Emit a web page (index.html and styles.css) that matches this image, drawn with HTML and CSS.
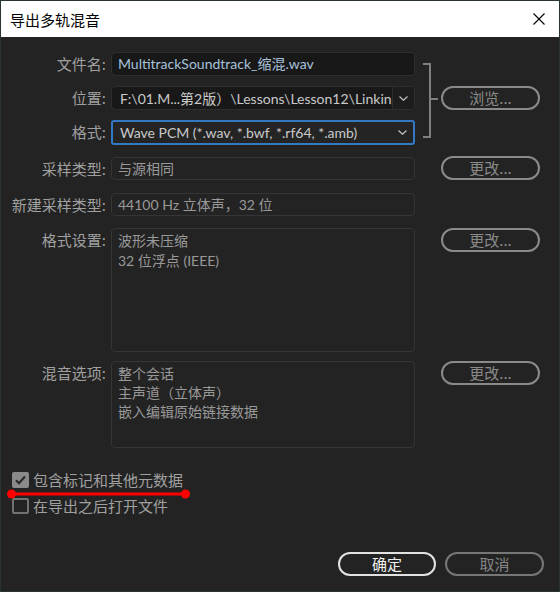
FILE: index.html
```html
<!DOCTYPE html>
<html lang="zh-CN">
<head>
    <meta charset="UTF-8">
    <title>导出多轨混音</title>
    <link rel="stylesheet" href="styles.css">
</head>
<body>
    <div class="dialog">
        <!-- 标题栏 -->
        <div class="titlebar">
            <span class="title">导出多轨混音</span>
            <svg class="close" width="12" height="12" viewBox="0 0 12 12">
                <path d="M0.5 0.5 L11.5 11.5 M11.5 0.5 L0.5 11.5" stroke="#000" stroke-width="1.1" fill="none"/>
            </svg>
        </div>

        <div class="content">
            <!-- 文件名 / 位置 / 格式 -->
            <div class="group">
                <div class="stack">
                    <div class="row">
                        <label class="label">文件名:</label>
                        <div class="field input filename">MultitrackSoundtrack_缩混.wav</div>
                    </div>
                    <div class="row">
                        <label class="label">位置:</label>
                        <div class="field select location">
                            <span class="select-text">F:\01.M...第2版）\Lessons\Lesson12\Linking Files</span>
                            <span class="arrow split">
                                <svg width="9" height="5" viewBox="0 0 9 5"><path d="M0.5 0.5 L4.5 4.3 L8.5 0.5" stroke="#bdbdbd" stroke-width="1.2" fill="none"/></svg>
                            </span>
                        </div>
                    </div>
                    <div class="row row-tall">
                        <label class="label">格式:</label>
                        <div class="field select format">
                            <span class="select-text">Wave PCM (*.wav, *.bwf, *.rf64, *.amb)</span>
                            <span class="arrow">
                                <svg width="9" height="5" viewBox="0 0 9 5"><path d="M0.5 0.5 L4.5 4.3 L8.5 0.5" stroke="#bdbdbd" stroke-width="1.2" fill="none"/></svg>
                            </span>
                        </div>
                    </div>
                </div>
                <div class="bracket">
                    <div class="bracket-line"></div>
                    <div class="bracket-tick"></div>
                </div>
                <button class="pill browse">浏览...</button>
            </div>

            <div class="row row-sample">
                <label class="label">采样类型:</label>
                <div class="field box">与源相同</div>
                <button class="pill side">更改...</button>
            </div>

            <div class="row row-new">
                <label class="label">新建采样类型:</label>
                <div class="field box punct">44100 Hz 立体声，32 位</div>
            </div>

            <div class="row row-settings">
                <label class="label">格式设置:</label>
                <div class="field box multi settings">
                    <div>波形未压缩</div>
                    <div>32 位浮点 (IEEE)</div>
                </div>
                <button class="pill side">更改...</button>
            </div>

            <div class="row row-mix">
                <label class="label">混音选项:</label>
                <div class="field box multi mix">
                    <div>整个会话</div>
                    <div>主声道（立体声）</div>
                    <div>嵌入编辑原始链接数据</div>
                </div>
                <button class="pill side">更改...</button>
            </div>

            <!-- 复选框 -->
            <div class="checks">
                <div class="check">
                    <span class="checkbox checked">
                        <svg width="17" height="16" viewBox="0 0 17 16"><path d="M4 8.2 L7 11.2 L13 4.6" stroke="#2a2a2a" stroke-width="2.2" fill="none"/></svg>
                    </span>
                    <span class="check-text">包含标记和其他元数据</span>
                </div>
                <div class="check second">
                    <span class="checkbox"></span>
                    <span class="check-text">在导出之后打开文件</span>
                </div>
                <svg class="mark" width="184" height="10" viewBox="0 0 184 10">
                    <line x1="4.5" y1="5" x2="178.5" y2="5" stroke="#ff0000" stroke-width="3"/>
                    <circle cx="4.5" cy="5" r="4.5" fill="#ff0000"/>
                    <circle cx="178.5" cy="5" r="4.5" fill="#ff0000"/>
                </svg>
            </div>
        </div>

        <!-- 底部按钮 -->
        <div class="footer">
            <button class="pill ok">确定</button>
            <button class="pill cancel">取消</button>
        </div>
    </div>
</body>
</html>
```

FILE: styles.css
```css
body, html {
    margin: 0;
    padding: 0;
    background-color: #232323;
}

.dialog {
    width: 560px;
    height: 592px;
    box-sizing: border-box;
    border: 1px solid #2b3434;
    background-color: #232323;
    display: flex;
    flex-direction: column;
    font-family: "Noto Sans CJK SC", "Noto Sans", sans-serif;
    font-size: 15px;
    color: #a0a0a0;
}

/* 标题栏 */
.titlebar {
    height: 36px;
    background-color: #ffffff;
    display: flex;
    align-items: center;
    justify-content: space-between;
    padding: 0 14px 0 9px;
    color: #000;
}

.title {
    font-size: 15px;
}

/* 内容 */
.content {
    padding-top: 15px;
}

.row {
    display: flex;
    align-items: flex-start;
}

.label {
    width: 105px;
    padding-right: 5px;
    text-align: right;
    line-height: 24px;
    flex-shrink: 0;
}

.field {
    width: 304px;
    box-sizing: border-box;
    border-radius: 4px;
    flex-shrink: 0;
    font-family: Lato, "Noto Sans CJK SC", sans-serif;
    font-size: 14px;
}

/* 全角逗号居中 */
.field.punct {
    font-family: Lato, "Noto Sans CJK TC", "Noto Sans CJK SC", sans-serif;
}

.group {
    display: flex;
    align-items: flex-start;
}

.stack {
    display: flex;
    flex-direction: column;
    gap: 10px;
}

.stack .row {
    height: 24px;
}

.stack .row-tall {
    height: 25px;
}

.input {
    height: 24px;
    line-height: 22px;
    padding-left: 6px;
    background-color: #181818;
    border: 1px solid #2e2e2e;
    color: #a7c1dc;
    white-space: nowrap;
}

.select {
    display: flex;
    align-items: center;
    height: 24px;
    color: #c9c9c9;
    overflow: hidden;
}

.select-text {
    flex: 1;
    padding-left: 8px;
    white-space: nowrap;
    overflow: hidden;
}

.arrow {
    width: 21px;
    height: 100%;
    display: flex;
    align-items: center;
    justify-content: center;
    flex-shrink: 0;
}

.location {
    background-color: #181818;
    border: 1px solid #2e2e2e;
}

.location .select-text {
    padding-left: 8px;
}

.arrow.split {
    border-left: 1px solid #2e2e2e;
    background-color: #1d1d1d;
}

.format {
    height: 25px;
    background-color: #242424;
    border: 2px solid #3278c2;
    border-radius: 3px;
}

.format .select-text {
    padding-left: 7px;
}

/* 括号 */
.bracket {
    width: 26px;
    height: 93px;
    flex-shrink: 0;
    position: relative;
}

.bracket-line {
    margin: 11px 0 0 8px;
    width: 6px;
    height: 71px;
    border: 2px solid #7f7f7f;
    border-left: none;
}

.bracket-tick {
    position: absolute;
    left: 15px;
    top: 46px;
    width: 8px;
    height: 2px;
    background-color: #7f7f7f;
}

/* 按钮 */
.pill {
    width: 99px;
    height: 24px;
    box-sizing: border-box;
    border: 2px solid #8a8a8a;
    border-radius: 12px;
    background: transparent;
    color: #8a8a8a;
    font-family: "Noto Sans CJK SC", "Noto Sans", sans-serif;
    font-size: 15px;
    line-height: 18px;
    padding: 0;
    flex-shrink: 0;
}

.browse {
    margin-top: 34px;
}

.side {
    margin-left: 26px;
}

.row-sample .side {
    margin-top: -1px;
}

.box {
    border: 1px solid #353535;
    padding-left: 6px;
    color: #999;
}

.row-sample, .row-new {
    height: 23px;
}

.row-sample .box, .row-new .box {
    height: 23px;
    line-height: 21px;
}

.row-sample {
    margin-top: 12px;
}

.row-new {
    margin-top: 13px;
}

.row-sample .label, .row-new .label {
    line-height: 23px;
}

.multi {
    padding-top: 2px;
    line-height: 20px;
}

.row-settings {
    margin-top: 12px;
}

.settings {
    height: 124px;
}

.row-mix {
    margin-top: 9px;
}

.mix {
    height: 87px;
    line-height: 19px;
    padding-top: 2px;
}

/* 复选框 */
.checks {
    position: relative;
    margin-top: 24px;
    padding-left: 11px;
}

.check {
    display: flex;
    align-items: center;
    height: 16px;
}

.check.second {
    margin-top: 10px;
}

.checkbox {
    width: 17px;
    height: 16px;
    box-sizing: border-box;
    border: 2px solid #727272;
    border-radius: 2px;
    margin-right: 4px;
    flex-shrink: 0;
}

.checkbox.checked {
    border: none;
    background-color: #8a8a8a;
}

.checkbox svg {
    display: block;
}

.check-text {
    color: #a0a0a0;
    line-height: 16px;
}

.mark {
    position: absolute;
    left: 6px;
    top: 17px;
}

/* 底部 */
.footer {
    margin-top: auto;
    display: flex;
    justify-content: flex-end;
    gap: 9px;
    padding: 0 15px 15px 0;
}

.ok {
    width: 98px;
    border-color: #e2e2e2;
    color: #f2f2f2;
}

.cancel {
    border-color: #777;
    color: #868686;
}
```
